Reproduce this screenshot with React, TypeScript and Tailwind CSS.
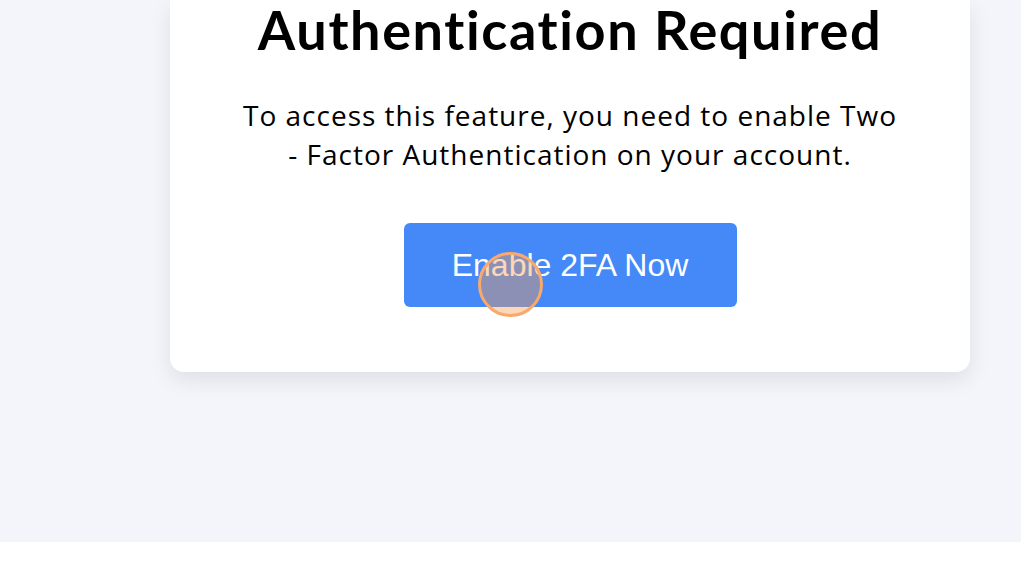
import React from "react";

export default function App() {
  return (
    <div className="w-full min-h-[571px] bg-white" style={{ fontFamily: "Lato, 'Open Sans', sans-serif" }}>
      <div className="h-[542px] bg-[#f4f5fa] overflow-hidden">
        <div className="ml-[170px] w-[800px] bg-white rounded-b-[14px] shadow-[0_8px_22px_rgba(0,0,0,0.09)] pb-[65px] flex flex-col items-center">
          <h1 className="text-[54px] leading-[60px] font-bold text-black tracking-[1.6px]">Authentication Required</h1>
          <p
            className="mt-[36px] w-[668px] text-center text-[28px] leading-[39px] tracking-[1px] text-black"
            style={{ fontFamily: "'Open Sans', Lato, sans-serif" }}
          >
            To access this feature, you need to enable Two - Factor Authentication on your account.
          </p>
          <div className="relative mt-[49px]">
            <button
              className="w-[333px] h-[84px] rounded-[6px] bg-[#4489f7] text-white text-[32px]"
              style={{ fontFamily: "'Liberation Sans', Arial, sans-serif" }}
            >
              Enable 2FA Now
            </button>
            {/* click marker */}
            <span className="absolute left-[74px] top-[29px] w-[65px] h-[65px] rounded-full border-[3px] border-[#f7a96e] bg-[#f89a50]/40" />
          </div>
        </div>
      </div>
    </div>
  );
}
